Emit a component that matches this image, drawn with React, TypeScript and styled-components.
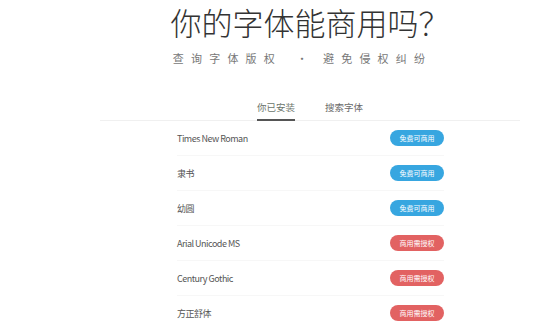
import React from 'react';
import styled, { createGlobalStyle } from 'styled-components';

const GlobalStyle = createGlobalStyle`
  html, body {
    margin: 0;
    padding: 0;
    background: #ffffff;
    font-family: "Noto Sans CJK SC", "Noto Sans", sans-serif;
  }
`;

const Page = styled.div`
  width: 420px;
  margin-left: 100px;
  padding-top: 2px;
  display: flex;
  flex-direction: column;
  align-items: stretch;
`;

const Title = styled.h1`
  margin: 0;
  text-align: center;
  font-size: 31px;
  line-height: 40px;
  font-weight: 300;
  color: #333;
`;

const Subtitle = styled.p`
  margin: 9px 0 0;
  padding-right: 15px;
  display: flex;
  justify-content: center;
  font-size: 11px;
  line-height: 14px;
  color: #777;
`;

const SubPart = styled.span`
  letter-spacing: 7.2px;
`;

const Dot = styled.span`
  width: 20px;
  margin: 0 11px 0 10px;
  text-align: center;
`;

const Tabs = styled.div`
  margin-top: 31px;
  display: flex;
  justify-content: center;
  gap: 30px;
  border-bottom: 1px solid #f0f0f0;
`;

const Tab = styled.div<{ active?: boolean }>`
  font-size: 9.5px;
  line-height: 14px;
  padding: 4px 0 5px;
  color: ${(p) => (p.active ? '#6a746a' : '#6a6a6a')};
  border-bottom: 2px solid ${(p) => (p.active ? '#555' : 'transparent')};
  margin-bottom: -1px;
`;

const List = styled.ul`
  list-style: none;
  margin: 0;
  padding: 0 76px 0 77px;
`;

const Row = styled.li`
  height: 34px;
  display: flex;
  align-items: center;
  justify-content: space-between;
  border-bottom: 1px solid #f7f7f7;
`;

const FontName = styled.span`
  font-size: 9px;
  letter-spacing: -0.5px;
  color: #555;
`;

const Badge = styled.span<{ free: boolean }>`
  width: 54px;
  height: 16px;
  border-radius: 8px;
  display: flex;
  align-items: center;
  justify-content: center;
  font-size: 7px;
  color: #fff;
  background: ${(p) => (p.free ? '#37a6e0' : '#e26262')};
`;

const fonts = [
  { name: 'Times New Roman', free: true },
  { name: '隶书', free: true },
  { name: '幼圆', free: true },
  { name: 'Arial Unicode MS', free: false },
  { name: 'Century Gothic', free: false },
  { name: '方正舒体', free: false },
];

const App: React.FC = () => {
  return (
    <>
      <GlobalStyle />
      <Page>
        <Title>你的字体能商用吗？</Title>
        <Subtitle>
          <SubPart>查询字体版权</SubPart>
          <Dot>·</Dot>
          <SubPart>避免侵权纠纷</SubPart>
        </Subtitle>
        <Tabs>
          <Tab active>你已安装</Tab>
          <Tab>搜索字体</Tab>
        </Tabs>
        <List>
          {fonts.map((f) => (
            <Row key={f.name}>
              <FontName>{f.name}</FontName>
              <Badge free={f.free}>{f.free ? '免费可商用' : '商用需授权'}</Badge>
            </Row>
          ))}
        </List>
      </Page>
    </>
  );
};

export default App;
